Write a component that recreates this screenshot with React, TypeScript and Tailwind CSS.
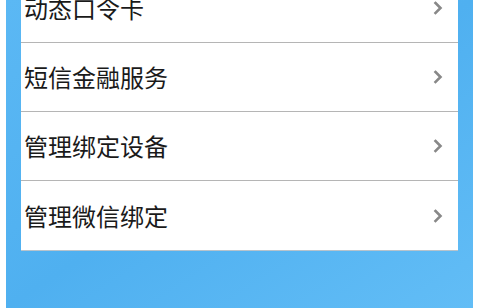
import React from "react"

const items = ["动态口令卡", "短信金融服务", "管理绑定设备", "管理微信绑定"]

function Chevron() {
  return (
    <svg width="10" height="14" viewBox="0 0 10 14" className="shrink-0">
      <path d="M2.5 2 L7.5 7 L2.5 12" fill="none" stroke="#888888" strokeWidth="2.6" strokeLinecap="square" />
    </svg>
  )
}

export default function App() {
  return (
    <div className="w-[500px] h-[308px] bg-white overflow-hidden flex">
      <div className="ml-[6px] w-[467px] h-full bg-gradient-to-br from-[#5bb8f4] via-[#4fb0f0] to-[#62bdf6] pl-[15px] pr-[15px]">
        <div
          className="mt-[-26px] bg-white border-b border-[#b7c3cc]"
          style={{ fontFamily: '"Noto Sans CJK SC", "Noto Sans", sans-serif' }}
        >
          {items.map((t, i) => (
            <div
              key={t}
              className={`h-[69px] flex items-center justify-between pl-[3px] pr-[15px] ${i < items.length - 1 ? "border-b border-[#b5b5b5]" : ""}`}
            >
              <span className="text-[24px] text-[#1a1a1a]">{t}</span>
              <Chevron />
            </div>
          ))}
        </div>
      </div>
    </div>
  )
}
